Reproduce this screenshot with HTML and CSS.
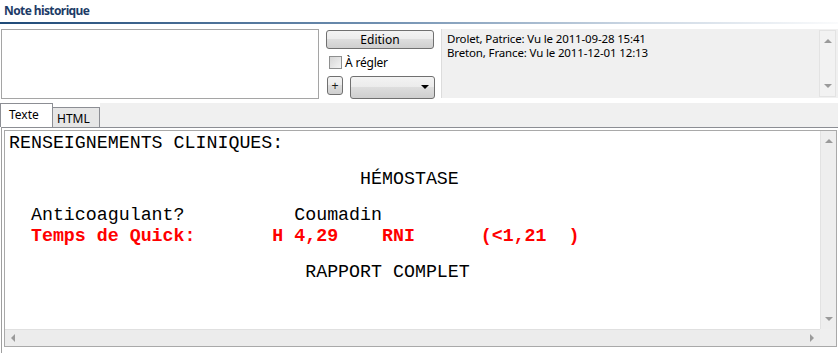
FILE: index.html
```html
<!DOCTYPE html>
<html lang="fr">
<head>
  <meta charset="UTF-8">
  <title>Note historique</title>
  <link rel="stylesheet" href="styles.css">
</head>
<body>
  <div class="title">Note historique</div>
  <div class="rule"></div>

  <div class="top">
    <div class="note"></div>
    <div class="controls">
      <button class="btn edition">Edition</button>
      <label class="check"><span class="box"></span>À régler</label>
      <div class="row">
        <button class="btn plus"><span>+</span></button>
        <div class="combo"><span class="caret"></span></div>
      </div>
    </div>
    <div class="history">
      <div class="lines">
        <div>Drolet, Patrice: Vu le 2011-09-28 15:41</div>
        <div>Breton, France: Vu le 2011-12-01 12:13</div>
      </div>
      <div class="vbar small">
        <span class="arr up"></span>
        <span class="arr down"></span>
      </div>
    </div>
  </div>

  <div class="tabbar">
    <div class="tab active">Texte</div>
    <div class="tab">HTML</div>
    <div class="tabfill"></div>
  </div>

  <div class="editor">
    <div class="frame">
      <div class="doc">
        <div class="ln">RENSEIGNEMENTS CLINIQUES:</div>
        <div class="ln"> </div>
        <div class="ln">                                HÉMOSTASE</div>
        <div class="ln"> </div>
        <div class="ln">  Anticoagulant?          Coumadin</div>
        <div class="ln red">  Temps de Quick:       H 4,29    RNI      (&lt;1,21  )</div>
        <div class="ln"> </div>
        <div class="ln">                           RAPPORT COMPLET</div>
      </div>
      <div class="vbar">
        <span class="arr up"></span>
        <span class="arr down"></span>
      </div>
      <div class="hbar">
        <span class="arr left"></span>
        <span class="arr right"></span>
      </div>
      <div class="corner"></div>
    </div>
  </div>
</body>
</html>
```

FILE: styles.css
```css
body {
  margin: 0;
  width: 838px;
  font-family: "Noto Sans", Arial, sans-serif;
  font-size: 12px;
  color: #000;
  background: #fff;
}

.title {
  height: 22px;
  line-height: 22px;
  padding-left: 4px;
  font-weight: bold;
  color: #1d3b66;
  letter-spacing: -0.6px;
}
.rule {
  height: 2px;
  background: linear-gradient(to right, #1f4a78, #6f8fb0 45%, #c9d5e2 75%, #fafbfc);
  margin-bottom: 5px;
}

.top {
  display: flex;
  height: 70px;
  overflow: hidden;
}
.note {
  margin-left: 1px;
  width: 316px;
  height: 68px;
  border: 1px solid #a5a5a5;
}
.controls {
  margin-left: 7px;
  width: 109px;
  padding-top: 1px;
  display: flex;
  flex-direction: column;
}
.btn {
  font-family: inherit;
  font-size: 12px;
  color: #000;
  border: 1px solid #707070;
  border-radius: 3px;
  background: linear-gradient(#f3f3f3, #ebebeb 50%, #dddddd 50%, #cfcfcf);
  padding: 0;
}
.edition {
  width: 108px;
  height: 20px;
  line-height: 17px;
}
.check {
  display: flex;
  align-items: center;
  height: 14px;
  margin-top: 6px;
  margin-left: 3px;
  gap: 3px;
  letter-spacing: -0.2px;
}
.box {
  width: 11px;
  height: 11px;
  border: 1px solid #8e8f8f;
  background: linear-gradient(135deg, #d6d6d6, #f4f4f4);
}
.row {
  display: flex;
  margin-top: 7px;
  margin-left: 1px;
}
.plus {
  width: 16px;
  height: 19px;
  line-height: 14px;
}
.plus span {
  font-family: "Liberation Sans", Arial, sans-serif;
  font-size: 12px;
  color: #1a1a1a;
}
.combo {
  margin-left: 7px;
  width: 83px;
  height: 21px;
  border: 1px solid #707070;
  border-radius: 3px;
  background: linear-gradient(#f3f3f3, #ebebeb 50%, #dddddd 50%, #cfcfcf);
  position: relative;
}
.caret {
  position: absolute;
  right: 5px;
  top: 8px;
  border-left: 4px solid transparent;
  border-right: 4px solid transparent;
  border-top: 4px solid #000;
}

.history {
  margin-left: 6px;
  flex: 1;
  display: flex;
  background: #f0f0f0;
  border-left: 1px solid #dcdcdc;
  height: 69px;
}
.lines {
  flex: 1;
  padding: 3px 0 0 5px;
  font-size: 11.5px;
  line-height: 14px;
  letter-spacing: -0.15px;
}

.vbar {
  position: relative;
  width: 15px;
  background: #eeeeee;
  border-left: 1px solid #e2e2e2;
}
.vbar.small {
  width: 15px;
  margin: 1px 2px 1px 0;
  background: #f2f2f2;
  border: 1px solid #e3e3e3;
}
.arr {
  position: absolute;
  width: 0;
  height: 0;
}
.arr.up {
  top: 8px;
  left: 4px;
  border-left: 4px solid transparent;
  border-right: 4px solid transparent;
  border-bottom: 4px solid #9a9a9a;
}
.arr.down {
  bottom: 8px;
  left: 4px;
  border-left: 4px solid transparent;
  border-right: 4px solid transparent;
  border-top: 4px solid #9a9a9a;
}
.arr.left {
  left: 6px;
  top: 4px;
  border-top: 4px solid transparent;
  border-bottom: 4px solid transparent;
  border-right: 4px solid #9a9a9a;
}
.arr.right {
  right: 6px;
  top: 4px;
  border-top: 4px solid transparent;
  border-bottom: 4px solid transparent;
  border-left: 4px solid #9a9a9a;
}

.tabbar {
  display: flex;
  align-items: flex-end;
  height: 28px;
}
.tab {
  height: 19px;
  width: 42px;
  padding-left: 4px;
  border: 1px solid #8c8e94;
  border-bottom: none;
  border-left: none;
  background: #e6e6e6;
  line-height: 21px;
}
.tab.active {
  height: 23px;
  width: 43px;
  padding-left: 8px;
  border-left: 1px solid #8c8e94;
  background: #fff;
  line-height: 21px;
}
.tabfill {
  flex: 1;
  align-self: stretch;
  margin-top: 4px;
  background: #f0f0f0;
}

.editor {
  margin-left: 1px;
  width: 833px;
  height: 221px;
  border: 1px solid #9f9f9f;
  padding: 2px;
  border-top-color: #8c8e94;
}
.frame {
  height: 215px;
  border: 1px solid #a9a9a9;
  display: grid;
  grid-template-columns: 1fr 16px;
  grid-template-rows: 1fr 17px;
}
.doc {
  padding: 3px 0 0 4px;
  font-family: "Liberation Mono", "Courier New", monospace;
  font-size: 18.3px;
  overflow: hidden;
}
.ln {
  height: 18px;
  line-height: 18px;
  white-space: pre;
}
.ln.red {
  margin-top: 3px;
  color: #ff0000;
  font-weight: bold;
}
.hbar {
  position: relative;
  background: #ececec;
  border-top: 1px solid #e0e0e0;
}
.corner {
  background: #efefef;
}
```
